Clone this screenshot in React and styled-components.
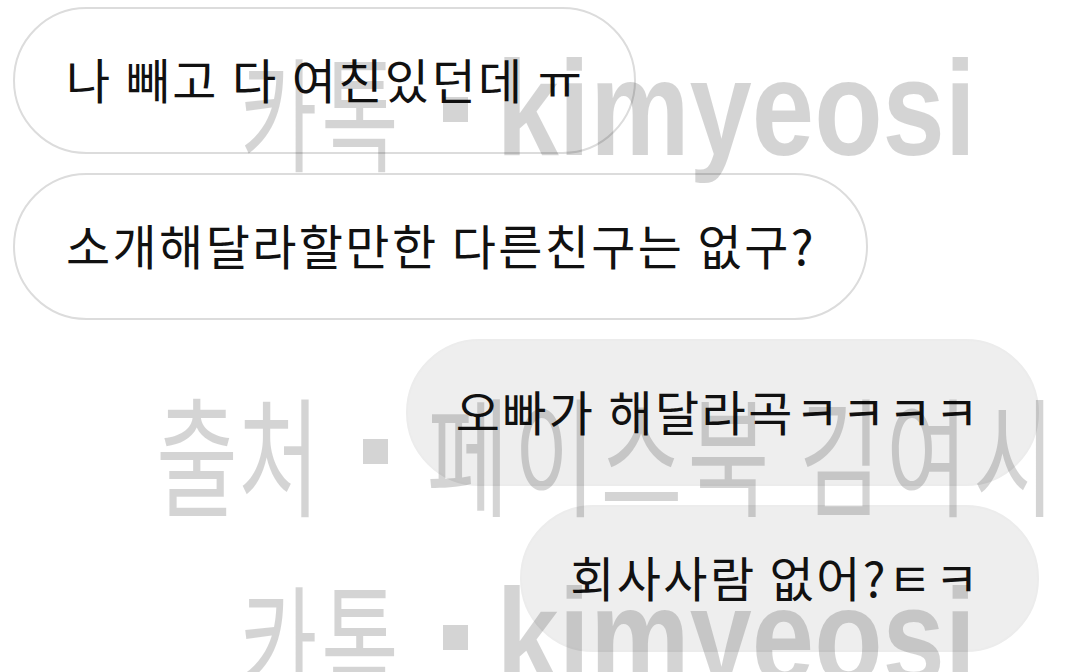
import React from "react";
import styled, { createGlobalStyle } from "styled-components";

const GlobalStyle = createGlobalStyle`
  html, body {
    margin: 0;
    padding: 0;
    background: #ffffff;
  }
  body {
    font-family: "Noto Sans CJK KR", "Noto Sans", sans-serif;
  }
`;

const Page = styled.div`
  position: relative;
  width: 1080px;
  height: 672px;
  overflow: hidden;
  background: #ffffff;
`;

const Thread = styled.div`
  display: flex;
  flex-direction: column;
  gap: 19px;
  padding: 7px 41px 0 13px;
`;

const Bubble = styled.div`
  align-self: ${(p) => (p.$mine ? "flex-end" : "flex-start")};
  box-sizing: border-box;
  height: 147px;
  display: flex;
  align-items: center;
  padding: 0 ${(p) => (p.$mine ? 56 : 50)}px 5px ${(p) => (p.$mine ? 48 : 51)}px;
  border-radius: 74px;
  background: ${(p) => (p.$mine ? "#eeeeee" : "#ffffff")};
  border: 2px solid ${(p) => (p.$mine ? "#ececec" : "#dcdcdc")};
  font-family: "Noto Sans CJK KR", sans-serif;
  font-weight: 400;
  font-size: 48px;
  letter-spacing: 2.4px;
  line-height: 1;
  color: #111111;
  white-space: nowrap;
`;

/* Overlaid source/credit stamps */
const Overlay = styled.div`
  position: absolute;
  inset: 0;
  pointer-events: none;
  color: rgba(0, 0, 0, 0.17);
`;

const Stamp = styled.div`
  position: absolute;
  left: ${(p) => p.$x}px;
  top: ${(p) => p.$y}px;
  display: flex;
  align-items: center;
  white-space: nowrap;
  line-height: 1;
`;

const Hangul = styled.span`
  display: inline-block;
  font-family: "Noto Sans CJK KR", sans-serif;
  font-weight: 400;
  font-size: ${(p) => p.$size}px;
  letter-spacing: ${(p) => p.$track || 0}px;
  transform: scaleY(${(p) => p.$stretch});
  transform-origin: center;
`;

const Latin = styled.span`
  display: inline-block;
  font-family: "Liberation Sans", Arial, sans-serif;
  font-weight: 700;
  font-size: ${(p) => p.$size}px;
  transform: scaleY(${(p) => p.$stretch});
  transform-origin: center;
`;

const Dot = styled.span`
  display: inline-block;
  flex: none;
  width: 25px;
  height: 25px;
  background: currentColor;
  margin: 0 ${(p) => p.$after}px 0 ${(p) => p.$before}px;
`;

function KakaoStamp({ y }) {
  return (
    <Stamp $x={240} $y={y}>
      <Hangul $size={84} $track={4} $stretch={1.48}>카톡</Hangul>
      <Dot $before={40} $after={29} />
      <Latin $size={112} $stretch={1.21}>kimyeosi</Latin>
    </Stamp>
  );
}

function SourceStamp({ y }) {
  return (
    <Stamp $x={156} $y={y}>
      <Hangul $size={89} $stretch={1.45}>출처</Hangul>
      <Dot $before={43} $after={39} />
      <Hangul $size={89} $track={5} $stretch={1.45}>페이스북 김여시</Hangul>
    </Stamp>
  );
}

const messages = [
  { id: 1, mine: false, text: "나 빼고 다 여친있던데 ㅠ" },
  { id: 2, mine: false, text: "소개해달라할만한 다른친구는 없구?" },
  { id: 3, mine: true, text: "오빠가 해달라곡ㅋㅋㅋㅋ" },
  { id: 4, mine: true, text: "회사사람 없어?ㅌㅋ" },
];

export default function App() {
  return (
    <>
      <GlobalStyle />
      <Page>
        <Thread>
          {messages.map((m) => (
            <Bubble key={m.id} $mine={m.mine}>
              {m.text}
            </Bubble>
          ))}
        </Thread>
        <Overlay>
          <KakaoStamp y={53} />
          <SourceStamp y={407} />
          <KakaoStamp y={581} />
        </Overlay>
      </Page>
    </>
  );
}
